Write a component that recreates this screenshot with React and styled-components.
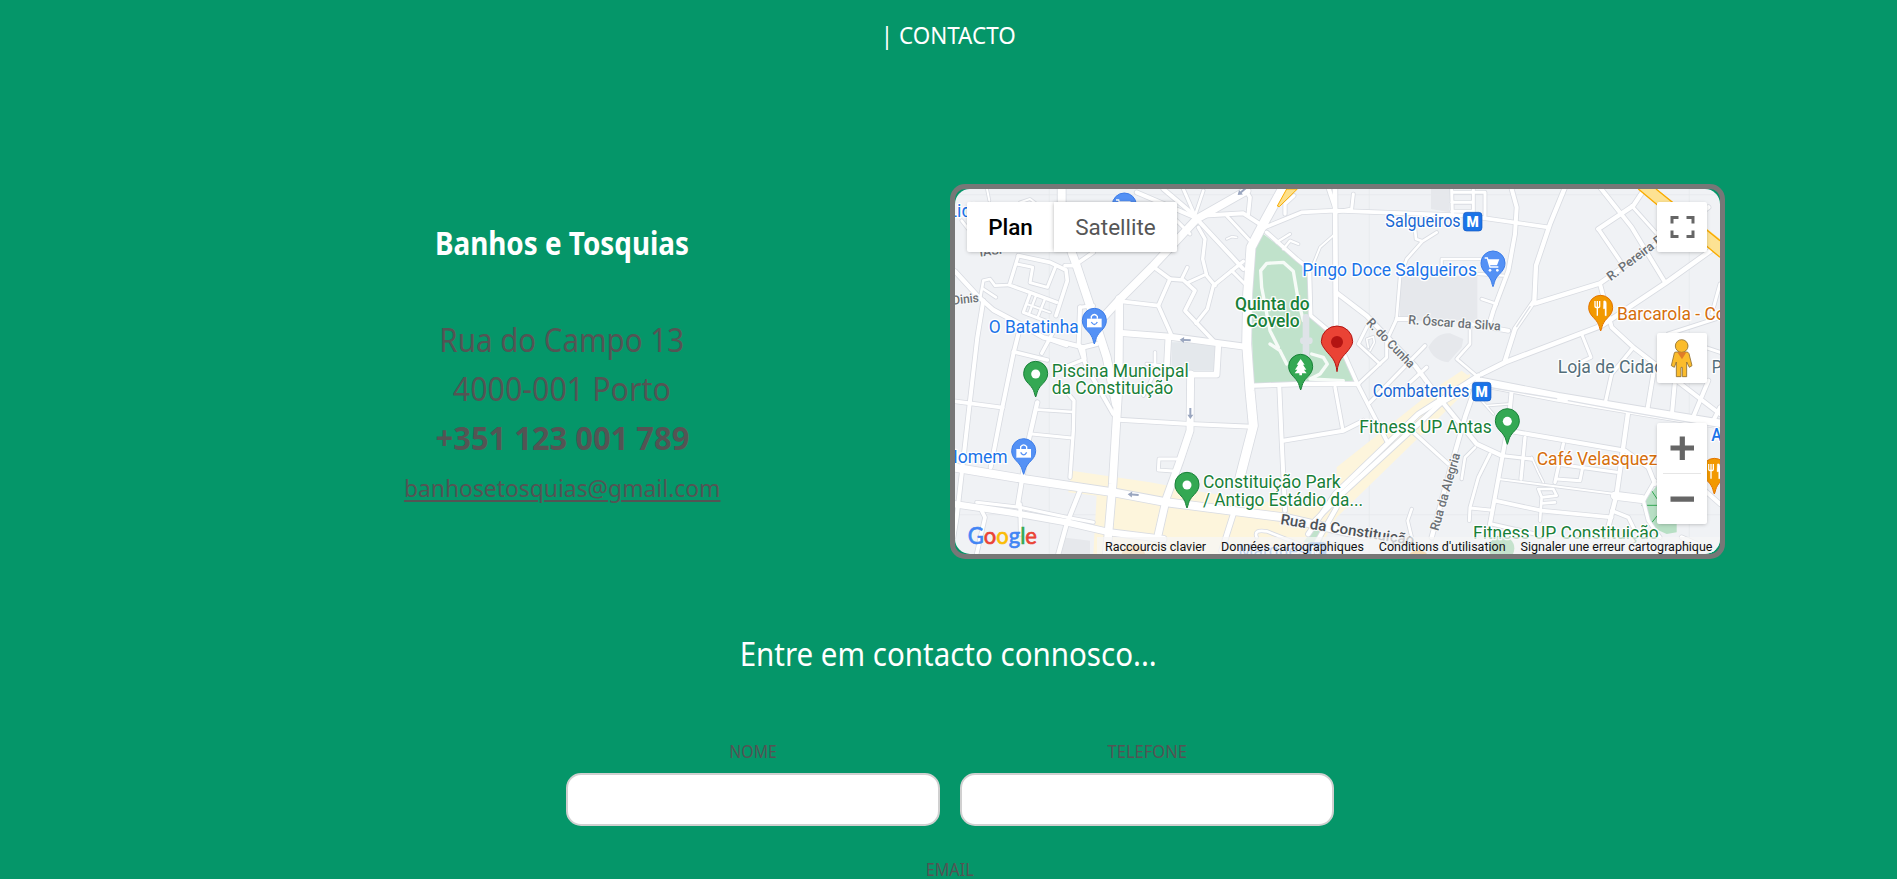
import React from "react";
import styled, { createGlobalStyle, css } from "styled-components";

const GlobalStyle = createGlobalStyle`
  * { box-sizing: border-box; }
  html, body { margin: 0; background: #059669; }
  body { font-family: "Noto Sans", "Open Sans", sans-serif; color: #545454; overflow: hidden; }
`;

const Page = styled.main`
  height: 879px;
  overflow: hidden;
  display: flex;
  flex-direction: column;
  align-items: center;
  & > * { flex-shrink: 0; }
`;

const Line = styled.span`
  display: inline-block;
  white-space: nowrap;
  transform: scaleX(${(p) => p.$squeeze || 1});
`;

const SectionTitle = styled.h1`
  margin: 0;
  padding-top: 17px;
  height: 184px;
  font-size: 24px;
  line-height: 36px;
  font-weight: 400;
  color: #fff;
`;

const Columns = styled.section`
  width: 1551px;
  display: grid;
  grid-template-columns: 776px 775px;
  margin-right: -2px;
`;

const Info = styled.div`
  display: flex;
  flex-direction: column;
  align-items: center;
  padding-top: 34px;
`;

const Name = styled.h2`
  margin: 0 0 48px;
  font-size: 32px;
  line-height: 49px;
  font-weight: 700;
  color: #fff;
`;

const InfoLine = styled.div`
  font-size: 32px;
  line-height: 49px;
  font-weight: ${(p) => (p.$bold ? 700 : 400)};
`;

const Mail = styled.a`
  margin-top: 6px;
  font-size: 24px;
  line-height: 40px;
  color: inherit;
  text-decoration: none;
  ${Line} {
    text-decoration: underline;
    text-decoration-thickness: 2px;
    text-underline-offset: 3px;
  }
`;

const MapFrame = styled.div`
  height: 375px;
  border: 5px solid #777;
  border-radius: 15px;
`;

const MapView = styled.div`
  position: relative;
  width: 765px;
  height: 365px;
  border-radius: 15px;
  overflow: hidden;
  background: #f0f2f5;
  font-family: Roboto, sans-serif;
`;

const Drawing = styled.svg`
  display: block;
`;

const control = css`
  position: absolute;
  background: #fff;
  border-radius: 2px;
  box-shadow: 0 1px 4px -1px rgba(0, 0, 0, 0.3);
`;

const TypeSwitch = styled.div`
  ${control}
  left: 12px;
  top: 13px;
  height: 50px;
  display: flex;
`;

const TypeButton = styled.button`
  width: ${(p) => p.$width}px;
  border: 0;
  padding: 0;
  background: none;
  font: ${(p) => (p.$active ? 500 : 400)} 22.5px Roboto, sans-serif;
  color: ${(p) => (p.$active ? "#000" : "#565656")};
  & + & { box-shadow: -1px 0 4px -1px rgba(0, 0, 0, 0.3); }
`;

const SideControl = styled.div`
  ${control}
  left: 702px;
  top: ${(p) => p.$top}px;
  width: 50px;
  height: ${(p) => p.$height || 50}px;
`;

const Legal = styled.div`
  position: absolute;
  right: 0;
  bottom: 0;
  display: flex;
  height: 17px;
  background: rgba(245, 245, 245, 0.75);
  font-size: 12.5px;
  line-height: 19px;
  color: #111;
`;

const LegalItem = styled.span`
  padding: 0 7.5px;
  white-space: nowrap;
`;

const FormTitle = styled.h2`
  margin: 66px 0 0;
  font-size: 32px;
  line-height: 58px;
  font-weight: 400;
  color: #fff;
`;

const FieldRow = styled.div`
  display: flex;
  gap: 20px;
  margin: 53px 0 0 3px;
`;

const Field = styled.label`
  display: flex;
  flex-direction: column;
  align-items: center;
  font-size: 18px;
  line-height: 30px;
`;

const Input = styled.input`
  width: 374px;
  height: 53px;
  margin-top: 7px;
  border: 2px solid #d0d0d0;
  border-radius: 15px;
  background: #fff;
`;

const EmailField = styled(Field)`
  margin: 28px 0 0 3px;
`;

const RIGHT = 1155;

// [path, width, x shift]; three drawing units make one pixel
const roads = [
  // west side
  ["M15 262 L85 338 L130 378 L210 420 L280 460 L400 490 L440 480", 13, 0],
  ["M100 350 L82 460 L60 650 L35 870 L20 1000 L10 1060", 12, 0],
  ["M205 450 L190 510 L155 680 L122 850", 12, 0],
  ["M15 652 L158 671", 11, 0],
  ["M190 503 L292 528", 11, 0],
  ["M320 425 L275 508", 10, 0],
  ["M262 655 L238 760 L222 850 L203 965", 13, 0],
  ["M262 677 L370 684", 8, 0],
  ["M245 750 L366 762", 9, 0],
  ["M330 600 L372 650 L370 740 L360 880", 10, 0],
  ["M390 370 L386 480 L410 550 L490 690", 12, 0],
  ["M390 370 L430 365", 10, 0],
  ["M400 490 L405 525 L330 555", 10, 0],
  ["M280 460 L350 485", 10, 0],
  ["M345 245 L372 245 L430 205", 11, 0],
  ["M205 215 L300 235 L348 258 L352 290 L318 395", 11, 0],
  ["M205 215 L178 303 L225 320 L320 355", 10, 0],
  ["M200 240 L248 250 L240 296 L292 310 L318 245", 9, 0],
  ["M240 330 L220 385 L315 422", 9, 0],
  ["M258 335 L236 392", 7, 0],
  ["M285 345 L262 402", 7, 0],
  ["M230 360 L300 385", 6, 0],
  ["M90 345 L100 290 L120 285 L135 305 L178 303", 8, 0],
  ["M100 315 L138 340", 8, 0],
  ["M35 110 L90 180", 8, 0],
  ["M110 10 L118 50 M210 55 L240 45 L260 60", 6, 0],
  // central streets
  ["M735 95 L640 15", 12, 0],
  ["M735 100 L560 25", 12, 0],
  ["M735 95 L700 15", 9, 0],
  ["M735 95 L760 20", 8, 0],
  ["M755 95 L880 88 L945 130", 12, 0],
  ["M880 10 L900 40 L895 90", 11, 0],
  ["M830 95 L900 170", 9, 0],
  ["M750 115 L880 255", 12, 0],
  ["M880 232 L790 305 L772 375 L738 418", 10, 0],
  ["M845 260 L885 300", 9, 0],
  ["M745 130 L765 165 L758 225 L770 275 L795 305", 10, 0],
  ["M720 150 L680 110", 9, 0],
  ["M610 248 L660 285 L625 365 L515 352", 11, 0],
  ["M660 285 L700 288 L735 320 L705 380 L790 470", 11, 0],
  ["M695 285 L712 250 M715 295 L770 270", 9, 0],
  ["M625 365 L665 455", 11, 0],
  ["M830 165 L845 158 L860 160", 5, 0],
  ["M615 505 L615 545 M590 540 L640 545 M610 575 L580 635", 8, 0],
  ["M515 447 L660 458 L885 488", 18, 0],
  ["M655 460 L650 560 L720 572 L800 572 L805 485", 17, 0],
  ["M722 570 L720 740 L690 830 L650 940 L625 1050", 21, 0],
  ["M505 707 L720 720 L905 728", 12, 0],
  ["M685 825 L627 825 L625 858 L680 862", 9, 0],
  // around the park
  ["M945 130 L1055 85 L1155 80 L1550 95 L1795 130", 11, 0],
  ["M1005 90 L1005 60 L1032 35", 10, 0],
  ["M950 145 L1040 225 L1078 255 L1082 395 L1160 460 L1220 595 L1310 770", 11, 0],
  ["M980 175 L1020 150 M1000 195 L1020 170 L1045 180", 7, 0],
  ["M1090 240 L1110 190 L1155 150", 6, 0],
  ["M1155 10 L1158 460", 14, 0],
  ["M1135 10 L1155 70", 12, 0],
  ["M910 605 L1050 600 L1225 600", 13, 0],
  ["M988 610 L995 770 L1005 980", 12, 0],
  ["M1155 610 L1178 735", 10, 0],
  ["M1000 770 L1180 740 L1240 710", 12, 0],
  ["M1158 325 L1250 395 L1395 545 L1470 645 L1580 780 L1650 812", 13, 0],
  // lower left
  ["M390 920 L350 1020 L325 1110", 13, 0],
  ["M210 960 L212 1050 M90 970 L105 1000 L80 1110", 11, 0],
  ["M80 955 L210 970 L350 1000 L430 1015", 9, 0],
  ["M850 990 L815 1100", 15, 0],
  ["M1160 970 L1080 1110", 13, 0],
  ["M920 1060 Q910 1035 950 1042 L1060 1085", 8, 0],
  // east side
  ["M0 85 L50 75 L55 30", 9, RIGHT],
  ["M350 15 L352 90 M415 15 L415 90 M350 25 L450 25 M350 55 L415 55 M450 25 L450 95 M350 82 L415 82", 9, RIGHT],
  ["M240 135 L243 165 L262 172 L305 145 M262 172 L215 225 L195 280 L185 400", 8, RIGHT],
  ["M185 405 L220 405 M520 440 L405 420", 12, RIGHT],
  ["M185 405 L155 470 L155 520 L70 600", 9, RIGHT],
  ["M100 420 L70 480 L135 540", 9, RIGHT],
  ["M100 490 L95 465 L115 458 L118 475 L105 500", 5, RIGHT],
  ["M270 485 L105 655 M275 550 L220 600", 10, RIGHT],
  ["M405 430 L405 480 L365 525 L430 580", 8, RIGHT],
  ["M320 275 L320 225 L440 225 M430 270 L505 275", 7, RIGHT],
  ["M530 15 L545 70 L540 150 L520 260 L475 380 L460 430", 12, RIGHT],
  ["M440 345 L485 360", 8, RIGHT],
  ["M690 10 L645 120 L603 245 L598 350 L540 435 L510 530", 13, RIGHT],
  ["M600 358 L795 298 L1120 70", 13, RIGHT],
  ["M790 135 L895 65 L925 20", 13, RIGHT],
  ["M795 10 L890 130 L990 295", 12, RIGHT],
  ["M790 135 L865 245", 11, RIGHT],
  ["M890 65 L975 160", 9, RIGHT],
  ["M440 570 L510 535 L800 425 L990 298 L1155 180", 14, RIGHT],
  ["M795 300 L830 430 L895 490 L1155 690", 12, RIGHT],
  ["M1000 450 L1155 400", 10, RIGHT],
  ["M740 450 L768 520 L715 545", 9, RIGHT],
  ["M895 490 L830 570 L810 660", 10, RIGHT],
  ["M955 570 L935 690 M1020 590 L1010 700 M1120 590 L1070 710 M1155 670 L1130 720", 12, RIGHT],
  ["M1155 300 L1130 390 M1110 490 L1155 505", 9, RIGHT],
  ["M430 585 L390 700 L350 840 L290 1060", 13, RIGHT],
  ["M235 745 L340 840", 10, RIGHT],
  ["M440 595 L670 640 L940 685 L1155 720", 27, RIGHT],
  ["M530 620 L520 720 L500 830 L465 1020", 12, RIGHT],
  ["M440 650 L475 690 M455 665 L520 660", 5, RIGHT],
  ["M520 740 L870 800 L940 850 L960 900", 12, RIGHT],
  ["M880 680 L845 930 L820 1030", 13, RIGHT],
  ["M570 760 L558 885 M685 780 L660 895", 10, RIGHT],
  ["M500 815 L590 825", 10, RIGHT],
  ["M490 885 L840 930", 6, RIGHT],
  ["M480 950 L620 980 L830 1000", 11, RIGHT],
  ["M665 840 L845 865 M665 885 L735 890 L742 855", 9, RIGHT],
  ["M590 820 L610 865 L625 895", 5, RIGHT],
  ["M465 810 L430 880 L405 970 L403 1010 M405 972 L465 978", 9, RIGHT],
  ["M470 1020 L600 1050", 10, RIGHT],
  ["M420 790 L390 820 L380 885", 8, RIGHT],
  ["M230 975 L218 1010 L230 1060", 8, RIGHT],
  ["M615 1010 L620 940 L610 915 L655 915 L665 935 L620 940 M660 955 L620 958", 8, RIGHT],
  ["M840 935 L920 945", 24, RIGHT],
  ["M830 980 L880 1000 L900 1040", 10, RIGHT],
  ["M960 890 L925 950 L940 1010 L975 1060", 10, RIGHT],
  ["M1040 1060 L1155 1110 M1110 920 L1155 960", 12, RIGHT],
];

const avenues = [
  ["M335 10 L335 80 L365 205 L380 245 L430 395 L470 520 L498 660", 24, 0],
  ["M460 400 L510 345 L610 245 L740 105 L890 20", 23, 0],
  ["M508 345 L506 600 L500 700 L488 900 L470 1110", 23, 0],
  ["M1000 10 L945 110 L903 190 L893 330 L890 480 L900 620 L910 725 L870 880", 27, 0],
  ["M10 850 L220 885 L490 925 L650 955 L1000 1000 L1240 1055", 24, 0],
  ["M10 960 L180 985 L350 1015 L480 1045 L640 1065", 19, 0],
  ["M430 575 L250 690 L0 930 L-80 1050", 14, RIGHT],
  ["M420 600 L320 655 L10 940 L-60 1010", 14, RIGHT],
];

const parkPaths = [
  "M1010 540 L990 500 L960 480 M985 490 L960 440 L935 310 L932 260 L950 238 L1000 235 L1030 262 L1045 350 L1060 410",
  "M1085 510 L1120 520 L1132 540 L1110 570 L1080 585 L1180 590",
];

const pins = [
  { x: 433, y: 480, color: "#5491f5", edge: "#3d7de8", icon: "bag" },
  { x: 221, y: 871, color: "#5491f5", edge: "#3d7de8", icon: "bag" },
  { x: 523, y: 134, color: "#5491f5", edge: "#3d7de8", icon: "cart" },
  { x: 1629, y: 308, color: "#5491f5", edge: "#3d7de8", icon: "cart" },
  { x: 257, y: 639, color: "#34a853", edge: "#188038", icon: "dot" },
  { x: 711, y: 972, color: "#34a853", edge: "#188038", icon: "dot" },
  { x: 1672, y: 781, color: "#34a853", edge: "#188038", icon: "dot" },
  { x: 1052, y: 618, color: "#34a853", edge: "#188038", icon: "tree" },
  { x: 1952, y: 441, color: "#f29900", edge: "#e37400", icon: "fork" },
  { x: 2293, y: 930, color: "#f29900", edge: "#e37400", icon: "fork" },
];

// [text, x, baseline, length, color, weight]
const labels = [
  ["Lidl", -8, 100, 0, "#1a73e8", 400],
  ["O Batatinha", 116, 446, 270, "#1a73e8", 400],
  ["Homem", -14, 838, 187, "#1a73e8", 400],
  ["Salgueiros", 1306, 130, 226, "#1967d2", 400],
  ["Pingo Doce Salgueiros", 1057, 276, 524, "#1a73e8", 400],
  ["Combatentes", 1268, 640, 290, "#1967d2", 400],
  ["Piscina Municipal", 305, 579, 411, "#188038", 400],
  ["da Constituição", 305, 631, 365, "#188038", 400],
  ["Constituição Park", 759, 912, 413, "#188038", 400],
  ["/ Antigo Estádio da...", 759, 965, 480, "#188038", 400],
  ["Quinta do", 855, 378, 224, "#188038", 500],
  ["Covelo", 889, 430, 160, "#188038", 500],
  ["Fitness UP Antas", 1228, 747, 397, "#188038", 400],
  ["Fitness UP Constituição", 1569, 1066, 557, "#188038", 400],
  ["Barcarola - Co", 2001, 408, 326, "#d56e0c", 400],
  ["Café Velasquez", 1760, 842, 362, "#d56e0c", 400],
  ["Loja de Cidadão", 1823, 568, 378, "#546e7a", 400],
  ["Pa", 2285, 568, 56, "#546e7a", 400],
  ["Av", 2284, 770, 54, "#1a73e8", 500],
];

const streets = [
  ["Dinis", 8, 362, 80, -6, 38],
  ["IASF", 90, 218, 78, -8, 36],
  ["R. Óscar da Silva", 1374, 420, 278, 4, 38],
  ["R. do Cunha", 1247, 418, 190, 46, 38],
  ["R. Pereira Reis", 1982, 292, 250, -37, 38],
  ["Rua da Alegria", 1465, 1042, 240, -74, 38],
  ["Rua da Constituição", 990, 1020, 405, 9, 44],
];

function PinIcon({ kind }) {
  if (kind === "dot") return <circle cy="-69" r="13.5" fill="#fff" />;
  if (kind === "bag")
    return (
      <g>
        <path d="M-22 -76 H22 V-50 H-22 Z" fill="#fff" />
        <path d="M-9 -76 V-83 Q0 -94 9 -83 V-76" fill="none" stroke="#fff" strokeWidth="4" />
        <path d="M-9 -66 Q0 -51 9 -66" fill="none" stroke="#5491f5" strokeWidth="4" />
      </g>
    );
  if (kind === "cart")
    return (
      <g>
        <path d="M-25 -86 H-17 L-9 -59 H16" fill="none" stroke="#fff" strokeWidth="4" />
        <path d="M-16 -82 H19 L12 -64 H-10 Z" fill="#fff" />
        <circle cx="-9" cy="-49" r="4" fill="#fff" />
        <circle cx="13" cy="-49" r="4" fill="#fff" />
      </g>
    );
  if (kind === "tree")
    return <path d="M0 -93 L12 -76 H7 L17 -61 H10 L18 -50 H4 V-44 H-4 V-50 H-18 L-10 -61 H-17 L-7 -76 H-12 Z" fill="#fff" />;
  return (
    <g fill="none" stroke="#fff" strokeWidth="4">
      <path d="M-17 -90 V-74 Q-17 -70 -10 -70 Q-3 -70 -3 -74 V-90 M-10 -90 V-46" />
      <path d="M9 -90 Q17 -93 17 -83 V-46 H13 V-67 H8 Z" fill="#fff" strokeWidth="1" />
    </g>
  );
}

function Pin({ x, y, color, edge, icon }) {
  return (
    <g transform={`translate(${x} ${y})`}>
      <path
        d="M0 0 C-4 -8 -4 -18 -10 -26 C-18 -40 -36 -48 -36 -71 A36 36 0 0 1 36 -71 C36 -48 18 -40 10 -26 C4 -18 4 -8 0 0 Z"
        fill={color}
        stroke={edge}
        strokeWidth="3"
      />
      <PinIcon kind={icon} />
    </g>
  );
}

function MetroBadge({ x, y }) {
  return (
    <g transform={`translate(${x} ${y})`}>
      <rect width="56" height="56" rx="10" fill="#1a73e8" stroke="#1558c0" strokeWidth="2" />
      <text x="28" y="43" textAnchor="middle" fontSize="42" fontWeight="900" fill="#fff">M</text>
    </g>
  );
}

function Arrow({ x, y, angle }) {
  return (
    <path
      transform={`translate(${x} ${y}) rotate(${angle})`}
      d="M-17 0 L-4 -9 V-3 H16 V3 H-4 V9 Z"
      fill="#9aa6bf"
    />
  );
}

function CityMap() {
  const stroke = (list, extra, color) =>
    list.map(([d, w, dx], i) => (
      <path key={i} d={d} transform={`translate(${dx} 0)`} strokeWidth={w + extra} stroke={color} />
    ));
  return (
    <Drawing width="765" height="365" viewBox="15 15 2295 1095">
      <path d="M15 32 H2310 M15 992 H2310 M298 15 V1110 M1258 15 V1110 M2218 15 V1110" stroke="#e6e8ec" strokeWidth="2" />
      <path d="M940 150 L1078 258 L1085 395 L1160 455 L1212 590 L910 602 L905 420 L912 190 Z" fill="#c0e2cb" />
      <path d="M725 475 H795 V560 H665 V475 Z" fill="#e4e8ec" />
      <path d="M1350 275 H1582 V410 H1350 Z M1443 15 L1500 15 L1498 85 L1443 75 Z M1435 490 Q1460 445 1500 448 L1540 465 L1535 490 L1495 535 Q1450 530 1435 490 Z M335 1060 L420 1070 L420 1110 H330 Z" fill="#e6e8ec" />
      <path d="M365 860 L600 895 L760 925 L960 955 L1160 960 L1155 890 L1475 600 L1535 560 L1575 590 L1530 640 L1160 1000 L1100 1110 H430 L440 935 L355 925 Z" fill="#fdf5dc" />
      <path d="M1160 850 L1475 600 L1560 570 L1560 610 L1320 820 L1160 985 Z" fill="#fdf5dc" />
      <path d="M1090 1035 L1125 1035 L1115 1075 H1060 Z" fill="#c0e2cb" />
      <path d="M2125 900 L2075 960 L2105 1030 L2150 1050 L2180 1045 V900 Z" fill="#b7dfc4" />
      <path d="M2075 964 H2130 M2098 910 L2125 950 M2098 1025 L2130 985" stroke="#34a853" strokeWidth="3" />

      <g fill="none" strokeLinejoin="round" strokeLinecap="round">
        {stroke(roads, 5, "#d9dce2")}
        {stroke(avenues, 5, "#d9dce2")}
        {stroke(roads, 0, "#fff")}
        {stroke(avenues, 0, "#fff")}
        {parkPaths.map((d) => <path key={d} d={d} stroke="#fff" strokeWidth="10" opacity=".85" />)}
        <path d="M1068 400 V520 M1060 470 H1078" stroke="#dfe3e8" strokeWidth="20" />
        <path d="M1610 609 L1820 644 M1855 650 L2050 686 L2310 731" stroke="#dde0e6" strokeWidth="4" />
        <path d="M1740 368 L1700 428" stroke="#dde0e6" strokeWidth="4" />
      </g>

      <path d="M1010 15 H1042 L988 68 L982 66 Z" fill="#fde08a" stroke="#f9ab00" strokeWidth="3" />
      <path d="M2065 15 H2120 L2310 165 V220 Z" fill="#fde293" />
      <path d="M2065 15 L2310 220 M2118 15 L2310 170" fill="none" stroke="#f9ab00" strokeWidth="4" />
      <Arrow x={706} y={468} angle={3} />
      <Arrow x={550} y={932} angle={4} />
      <Arrow x={721} y={688} angle={-90} />
      <Arrow x={876} y={22} angle={-40} />

      <g fontWeight="500" fill="#6b7075" stroke="#f7f8f9" strokeWidth="7" paintOrder="stroke" strokeLinejoin="round">
        {streets.map(([t, x, y, len, angle, size]) => (
          <text key={t} transform={`translate(${x} ${y}) rotate(${angle})`} fontSize={size} textLength={len} lengthAdjust="spacingAndGlyphs" fill={size > 40 ? "#4d5156" : undefined}>
            {t}
          </text>
        ))}
      </g>

      {pins.map((p) => <Pin key={`${p.x}-${p.y}`} {...p} />)}
      <circle cx="550" cy="1118" r="36" fill="#f5a63c" opacity=".8" />
      <circle cx="1405" cy="1135" r="36" fill="#f29900" />
      <circle cx="1655" cy="1093" r="38" fill="#34a853" />

      <g fontSize="54" stroke="#fff" strokeWidth="8" paintOrder="stroke" strokeLinejoin="round">
        <text x="865" y="1118" fill="#1967d2" textLength="205" lengthAdjust="spacingAndGlyphs">Marquês</text>
        {labels.map(([t, x, y, len, color, weight]) => (
          <text key={t} x={x} y={y} fill={color} fontWeight={weight} textLength={len || undefined} lengthAdjust="spacingAndGlyphs">
            {t}
          </text>
        ))}
      </g>
      <MetroBadge x={1540} y={85} />
      <MetroBadge x={1567} y={595} />
      <MetroBadge x={1072} y={1076} />

      <path
        d="M1161 563 C1157 525 1142 518 1128 500 C1119 488 1114 481 1114 472 A47 46 0 0 1 1208 472 C1208 481 1203 488 1194 500 C1180 518 1165 525 1161 563 Z"
        fill="#ea4335"
        stroke="#b31412"
        strokeWidth="3"
      />
      <circle cx="1161" cy="474" r="18" fill="#b31412" />

      <text x="53" y="1081" fontSize="69" fontFamily="Lato, sans-serif" fontWeight="400" textLength="208" lengthAdjust="spacingAndGlyphs">
        <tspan fill="#4285f4" stroke="#4285f4" strokeWidth="2">G</tspan>
        <tspan fill="#ea4335" stroke="#ea4335" strokeWidth="2">o</tspan>
        <tspan fill="#fbbc04" stroke="#fbbc04" strokeWidth="2">o</tspan>
        <tspan fill="#4285f4" stroke="#4285f4" strokeWidth="2">g</tspan>
        <tspan fill="#34a853" stroke="#34a853" strokeWidth="2">l</tspan>
        <tspan fill="#ea4335" stroke="#ea4335" strokeWidth="2">e</tspan>
      </text>
    </Drawing>
  );
}

function MapWidget() {
  return (
    <MapView>
      <CityMap />
      <Legal>
        <LegalItem>Raccourcis clavier</LegalItem>
        <LegalItem>Données cartographiques</LegalItem>
        <LegalItem>Conditions d'utilisation</LegalItem>
        <LegalItem>Signaler une erreur cartographique</LegalItem>
      </Legal>
      <TypeSwitch>
        <TypeButton $active $width={87}>Plan</TypeButton>
        <TypeButton $width={123}>Satellite</TypeButton>
      </TypeSwitch>
      <SideControl $top={13}>
        <Drawing width="50" height="50" viewBox="0 0 50 50">
          <path d="M15 21.5 V15.5 H21.5 M29.5 15.5 H36 V21.5 M36 28.5 V34.5 H29.5 M21.5 34.5 H15 V28.5" fill="none" stroke="#666" strokeWidth="3" />
        </Drawing>
      </SideControl>
      <SideControl $top={144}>
        <Drawing width="50" height="50" viewBox="0 0 150 150">
          <g stroke="#8d6e2f" strokeWidth="2.5" fill="#fbbc2c">
            <path d="M52 60 Q52 57 58 57 H89 Q94 57 96 62 L105 98 L97 103 L89 87 V131 H76 V103 H72 V131 H58 V87 L52 103 L43 98 Z" />
            <circle cx="74" cy="39" r="19" />
          </g>
          <path d="M61 58 H88 L75 79 Z" fill="#e07b28" />
        </Drawing>
      </SideControl>
      <SideControl $top={234} $height={101}>
        <Drawing width="50" height="101" viewBox="0 0 50 101">
          <path d="M13.5 25 H37 M25.3 13.5 V37 M13.5 76.2 H37" stroke="#666" strokeWidth="5.2" />
          <path d="M6 50.5 H44" stroke="#e6e6e6" />
        </Drawing>
      </SideControl>
    </MapView>
  );
}

export default function App() {
  return (
    <Page>
      <GlobalStyle />
      <SectionTitle><Line $squeeze={0.935}>| CONTACTO</Line></SectionTitle>
      <Columns>
        <Info>
          <Name><Line $squeeze={0.87}>Banhos e Tosquias</Line></Name>
          <InfoLine><Line $squeeze={0.922}>Rua do Campo 13</Line></InfoLine>
          <InfoLine><Line $squeeze={0.95}>4000-001 Porto</Line></InfoLine>
          <InfoLine $bold><Line $squeeze={0.965}>+351 123 001 789</Line></InfoLine>
          <Mail href="mailto:banhosetosquias@gmail.com"><Line $squeeze={0.952}>banhosetosquias@gmail.com</Line></Mail>
        </Info>
        <MapFrame><MapWidget /></MapFrame>
      </Columns>
      <FormTitle><Line $squeeze={0.922}>Entre em contacto connosco...</Line></FormTitle>
      <FieldRow>
        <Field><Line $squeeze={0.88}>NOME</Line><Input /></Field>
        <Field><Line $squeeze={0.92}>TELEFONE</Line><Input /></Field>
      </FieldRow>
      <EmailField><Line $squeeze={0.9}>EMAIL</Line><Input /></EmailField>
    </Page>
  );
}
